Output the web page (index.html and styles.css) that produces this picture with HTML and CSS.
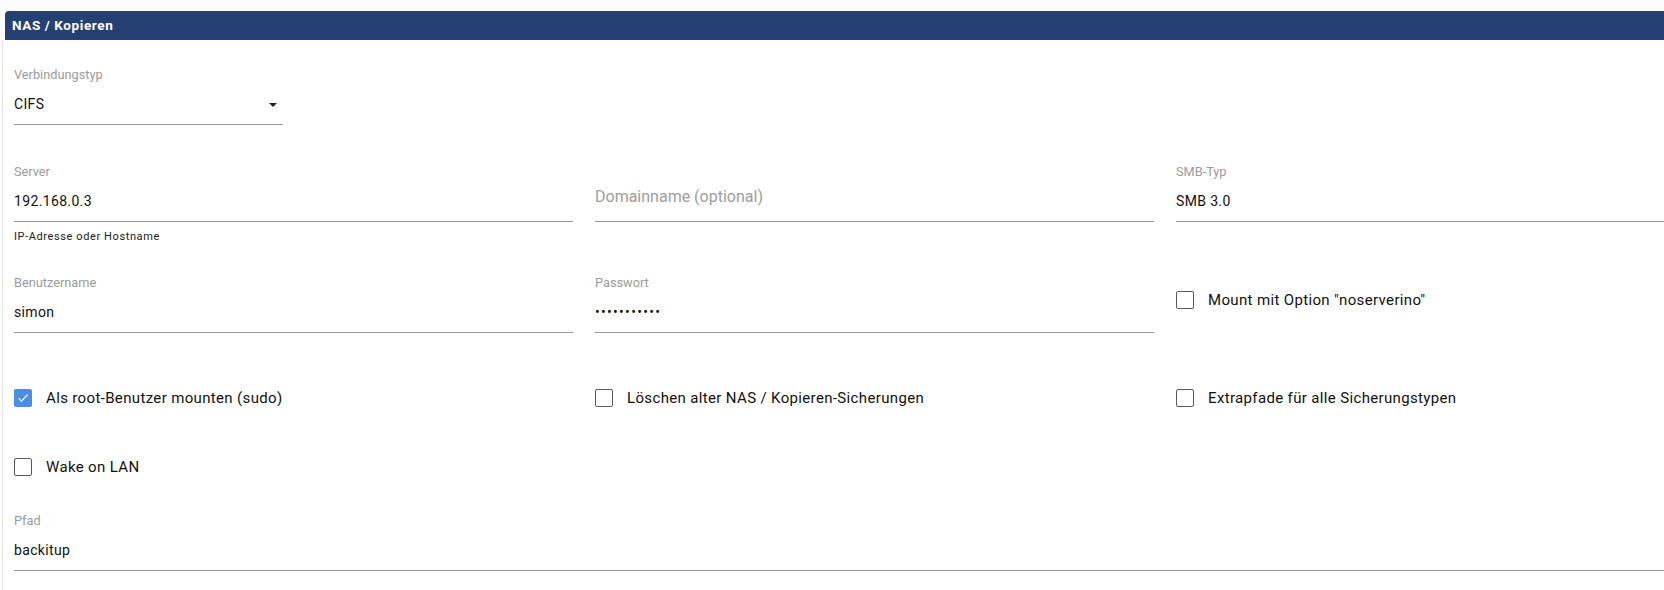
FILE: index.html
```html
<!DOCTYPE html>
<html lang="de">
<head>
<meta charset="utf-8">
<title>NAS / Kopieren</title>
<link rel="stylesheet" href="styles.css">
</head>
<body>
<div class="card">
  <div class="card-head">NAS / Kopieren</div>
  <div class="card-body">
    <div class="row row-1">
      <div class="field select">
        <div class="field-label">Verbindungstyp</div>
        <div class="field-input">CIFS<span class="arrow"></span></div>
      </div>
    </div>

    <div class="row row-2">
      <div class="field">
        <div class="field-label">Server</div>
        <div class="field-input">192.168.0.3</div>
        <div class="helper">IP-Adresse oder Hostname</div>
      </div>
      <div class="field">
        <div class="field-label"></div>
        <div class="field-input placeholder-input"><span class="placeholder">Domainname (optional)</span></div>
      </div>
      <div class="field">
        <div class="field-label">SMB-Typ</div>
        <div class="field-input">SMB 3.0</div>
      </div>
    </div>

    <div class="row row-3">
      <div class="field">
        <div class="field-label">Benutzername</div>
        <div class="field-input">simon</div>
      </div>
      <div class="field">
        <div class="field-label">Passwort</div>
        <div class="field-input dots">•••••••••••</div>
      </div>
      <div class="check-cell">
        <label class="check"><span class="box"></span><span class="check-text">Mount mit Option "noserverino"</span></label>
      </div>
    </div>

    <div class="row row-4">
      <label class="check"><span class="box checked"><svg viewBox="0 0 18 18" width="18" height="18"><path d="M4.5 9.2l3 3 6-6.6" fill="none" stroke="#fff" stroke-width="1.2"/></svg></span><span class="check-text">Als root-Benutzer mounten (sudo)</span></label>
      <label class="check"><span class="box"></span><span class="check-text">Löschen alter NAS / Kopieren-Sicherungen</span></label>
      <label class="check"><span class="box"></span><span class="check-text">Extrapfade für alle Sicherungstypen</span></label>
    </div>

    <div class="row row-5">
      <label class="check"><span class="box"></span><span class="check-text">Wake on LAN</span></label>
    </div>

    <div class="row row-6">
      <div class="field wide">
        <div class="field-label">Pfad</div>
        <div class="field-input">backitup</div>
      </div>
    </div>
  </div>
</div>
</body>
</html>
```

FILE: styles.css
```css
html, body {
  margin: 0;
  padding: 0;
}
body {
  background: #fcfcfc;
  overflow: hidden;
  font-family: Roboto, "Liberation Sans", sans-serif;
  color: #111;
}
.card {
  margin: 11px 0 0 2px;
  width: 1800px;
  background: #fff;
}
.card-head {
  margin-left: 3px;
  height: 29px;
  line-height: 29px;
  background: #254073;
  border-radius: 4px 4px 0 0;
  padding-left: 7px;
  color: #fff;
  font-size: 13.5px;
  font-weight: 700;
  letter-spacing: 0.6px;
}
.card-body {
  border-left: 1px solid #e2e2e2;
  padding: 27px 0 40px 11px;
  background: #fff;
}
.row {
  display: grid;
  grid-template-columns: 559px 559px 559px;
  column-gap: 22px;
}
.row-2 { margin-top: 39px; }
.row-3 { margin-top: 32px; }
.row-4 { margin-top: 56px; }
.row-5 { margin-top: 51px; }
.row-6 { margin-top: 37px; }

.field {
  display: flex;
  flex-direction: column;
}
.field.select {
  width: 269px;
}
.field.wide {
  grid-column: 1 / -1;
}
.field-label {
  height: 16px;
  line-height: 16px;
  font-size: 12.75px;
  color: #9b9b9b;
}
.field-input {
  margin-top: 9px;
  height: 24px;
  padding-bottom: 8px;
  border-bottom: 1px solid #949494;
  display: flex;
  align-items: center;
  font-size: 14px;
  letter-spacing: 0.35px;
  color: #111;
}
.placeholder-input {
  align-items: flex-start;
}
.placeholder {
  font-size: 16px;
  line-height: 16px;
  color: #9e9e9e;
  letter-spacing: 0;
}
.dots {
  letter-spacing: 1.3px;
  font-size: 14px;
}
.select .field-input {
  justify-content: space-between;
  padding-right: 6px;
}
.arrow {
  width: 0;
  height: 0;
  border-left: 4.5px solid transparent;
  border-right: 4.5px solid transparent;
  border-top: 4.5px solid #222;
  margin-top: 2px;
}
.helper {
  margin-top: 9px;
  font-size: 11px;
  line-height: 12px;
  color: #222;
  letter-spacing: 0.6px;
}
.check-cell {
  padding-top: 16px;
}
.check {
  display: flex;
  align-items: center;
  gap: 14px;
  height: 18px;
}
.box {
  width: 18px;
  height: 18px;
  box-sizing: border-box;
  border: 1px solid #5a5a5a;
  border-radius: 2px;
  flex: none;
  display: block;
}
.box.checked {
  border: none;
  background: #4a8fe3;
}
.box svg {
  display: block;
}
.check-text {
  font-size: 15px;
  color: #111;
  letter-spacing: 0.35px;
}
```
